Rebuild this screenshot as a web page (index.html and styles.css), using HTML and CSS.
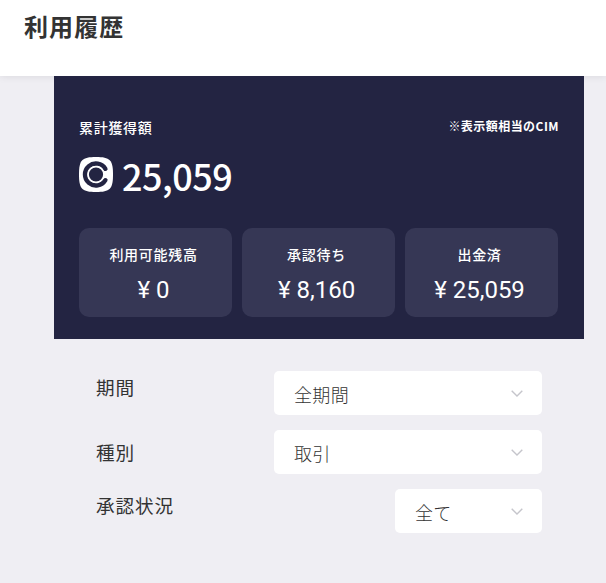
FILE: index.html
```html
<!DOCTYPE html>
<html lang="ja">
<head>
  <meta charset="UTF-8">
  <meta name="viewport" content="width=device-width, initial-scale=1.0">
  <title>利用履歴</title>
  <link rel="stylesheet" href="styles.css">
</head>
<body>
  <header class="header">
    <h1 class="title">利用履歴</h1>
  </header>

  <main>
    <section class="summary">
      <div class="summary-head">
        <span class="summary-label">累計獲得額</span>
        <span class="summary-note">※表示額相当のCIM</span>
      </div>
      <div class="total">
        <svg class="coin" width="34" height="35" viewBox="0 0 34 35">
          <path d="M17 0C31 0 34 3 34 17.5S31 35 17 35 0 32 0 17.5 3 0 17 0Z" fill="#fff"/>
          <path d="M26.4 11.8A11 11 0 1 0 26.4 23.2" fill="none" stroke="#232442" stroke-width="4.4" stroke-linecap="round"/>
          <circle cx="17" cy="17.5" r="7.8" fill="#232442" stroke="#fff" stroke-width="1.4"/>
        </svg>
        <span class="total-value">25,059</span>
      </div>
      <div class="cards">
        <div class="card">
          <p class="card-label">利用可能残高</p>
          <p class="card-value">¥ 0</p>
        </div>
        <div class="card">
          <p class="card-label">承認待ち</p>
          <p class="card-value">¥ 8,160</p>
        </div>
        <div class="card">
          <p class="card-label">出金済</p>
          <p class="card-value">¥ 25,059</p>
        </div>
      </div>
    </section>

    <section class="filters">
      <div class="filter">
        <span class="filter-label">期間</span>
        <button class="select" type="button">
          <span>全期間</span>
          <svg class="arrow" width="12" height="7" viewBox="0 0 12 7"><path d="M.7.7 6 5.9 11.3.7"/></svg>
        </button>
      </div>
      <div class="filter filter-type">
        <span class="filter-label">種別</span>
        <button class="select" type="button">
          <span>取引</span>
          <svg class="arrow" width="12" height="7" viewBox="0 0 12 7"><path d="M.7.7 6 5.9 11.3.7"/></svg>
        </button>
      </div>
      <div class="filter">
        <span class="filter-label">承認状況</span>
        <button class="select select-small" type="button">
          <span>全て</span>
          <svg class="arrow" width="12" height="7" viewBox="0 0 12 7"><path d="M.7.7 6 5.9 11.3.7"/></svg>
        </button>
      </div>
    </section>
  </main>
</body>
</html>
```
FILE: styles.css
```css
* {
  box-sizing: border-box;
}
body {
  margin: 0;
  min-height: 583px;
  background-color: #efeef3;
  color: #333;
  font-family: "Noto Sans CJK JP", sans-serif;
}
.header {
  height: 76px;
  padding: 8px 24px 0;
  background-color: #fff;
  box-shadow: 0 0 8px rgba(0, 0, 0, 0.1);
}
.title {
  margin: 0;
  font-size: 24px;
  line-height: 36px;
  font-weight: 700;
  letter-spacing: 1.1px;
}
.summary {
  position: relative;
  width: 530px;
  height: 263px;
  margin-left: 54px;
  padding: 41px 25px 0;
  background-color: #232442;
  color: #fff;
}
.summary-head {
  display: flex;
  justify-content: space-between;
  height: 22px;
  line-height: 20px;
}
.summary-label {
  font-size: 14px;
  font-weight: 500;
  letter-spacing: 0.7px;
}
.summary-note {
  font-size: 12px;
  font-weight: 700;
  letter-spacing: 0.45px;
  line-height: 18px;
}
.total {
  display: flex;
  align-items: flex-start;
  gap: 9px;
  height: 89px;
  padding-top: 18px;
}
.coin {
  flex: none;
}
.total-value {
  font-size: 36px;
  line-height: 36px;
  font-weight: 500;
  letter-spacing: -0.5px;
}
.cards {
  display: grid;
  grid-template-columns: repeat(3, 153px);
  gap: 10px;
}
.card {
  height: 89px;
  padding: 16px 4px 0 0;
  border-radius: 10px;
  background-color: #363755;
  text-align: center;
}
.card-label {
  margin: 0;
  font-size: 14px;
  line-height: 20px;
  font-weight: 500;
  letter-spacing: 0.7px;
}
.card-value {
  margin: 12px 0 0;
  font-family: Roboto, "Noto Sans CJK JP", sans-serif;
  font-size: 24px;
  line-height: 28px;
}
.filters {
  display: flex;
  flex-direction: column;
  gap: 15px;
  padding: 32px 64px 0 96px;
}
.filter {
  display: flex;
  justify-content: space-between;
}
.filter-label {
  font-size: 18.6px;
  line-height: 32px;
  letter-spacing: 0.93px;
}
.filter-type .filter-label {
  margin-top: 6px;
}
.select {
  display: flex;
  align-items: center;
  justify-content: space-between;
  width: 268px;
  height: 44px;
  padding: 2px 19.5px 0 20px;
  border: 0;
  border-radius: 5px;
  background-color: #fff;
  color: #333;
  font-family: inherit;
  font-size: 18px;
  font-weight: 300;
  letter-spacing: 0.36px;
}
.select-small {
  width: 147px;
}
.arrow {
  margin-top: -2px;
  fill: none;
  stroke: #c5c5cb;
  stroke-width: 1.4;
}
```
